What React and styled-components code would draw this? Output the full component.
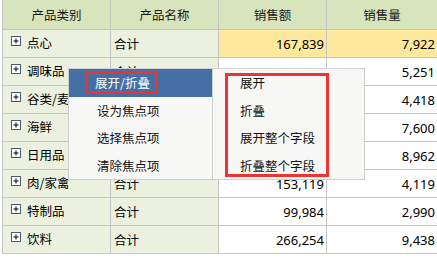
import React from "react";
import styled, { createGlobalStyle } from "styled-components";

const Global = createGlobalStyle`
  html, body { margin: 0; padding: 0; background: #fff; }
  body { font-family: "Noto Sans", "Noto Sans CJK SC", sans-serif; }
`;

const Page = styled.div`
  position: relative;
  width: 437px;
  height: 258px;
  padding-left: 2px;
  box-sizing: border-box;
  overflow: hidden;
`;

const Table = styled.table`
  border-collapse: collapse;
  table-layout: fixed;
  width: 435px;
  border: 1px solid #c6c6c6;
  border-top: none;
`;

const Th = styled.th`
  height: 29px;
  padding: 0;
  background: #d8e4bc;
  border: 1px solid #c6c6c6;
  border-top: none;
  font-weight: normal;
  font-size: 12.5px;
  color: #1a1a1a;
  font-family: "Noto Sans CJK SC", sans-serif;
  text-align: center;
`;

const Td = styled.td`
  height: 27px;
  padding: 0 2px 0 3px;
  border: 1px solid #c6c6c6;
  background: ${(p) => (p.$tone === "dim" ? "#ebf1de" : p.$tone === "hot" ? "#fee89b" : "#fff")};
  text-align: ${(p) => (p.$num ? "right" : "left")};
  font-size: ${(p) => (p.$num ? "13px" : "12.5px")};
  font-family: ${(p) => (p.$num ? '"Noto Sans", sans-serif' : '"Noto Sans CJK SC", sans-serif')};
  color: #000;
  white-space: nowrap;
  overflow: hidden;
`;

const Cat = styled.div`
  display: flex;
  align-items: center;
  gap: 6px;
  padding-left: 5px;
  margin-top: -2px;
`;

const Plus = styled.svg`
  flex: none;
  margin-top: -3px;
`;

const Menu = styled.div`
  position: absolute;
  top: 68px;
  left: ${(p) => p.$left}px;
  width: ${(p) => p.$width}px;
  box-sizing: border-box;
  background: #f7f7f5;
  border: 1px solid #cfcfcf;
  font-family: "Noto Sans CJK SC", sans-serif;
  font-size: 12.5px;
  color: #111;
`;

const Item = styled.div`
  height: 27.5px;
  display: flex;
  align-items: center;
  padding-left: ${(p) => p.$pad}px;
  background: ${(p) => (p.$active ? "#4570a6" : "transparent")};
  color: ${(p) => (p.$active ? "#fff" : "#111")};
`;

const Marked = styled.span`
  margin-left: -12px;
  padding: 0 6px 0 8px;
  height: 21px;
  line-height: 17px;
  box-sizing: border-box;
  border: 2px solid #ee3333;
  display: inline-flex;
  align-items: center;
`;

const Frame = styled.div`
  position: absolute;
  left: 12px;
  top: 4px;
  width: 104px;
  height: 104px;
  box-sizing: border-box;
  border: 3px solid #ee3333;
`;

const rows = [
  ["点心", "167,839", "7,922", true],
  ["调味品", "104,368", "5,251"],
  ["谷类/麦片", "88,650", "4,418"],
  ["海鲜", "131,261", "7,600"],
  ["日用品", "234,507", "8,962"],
  ["肉/家禽", "153,119", "4,119"],
  ["特制品", "99,984", "2,990"],
  ["饮料", "266,254", "9,438"],
];

function PlusBox() {
  return (
    <Plus width="10" height="10" viewBox="0 0 10 10">
      <rect x="0.5" y="0.5" width="9" height="9" fill="#fff" stroke="#4a5a7a" />
      <path d="M2.5 5H7.5M5 2.5V7.5" stroke="#000" strokeWidth="1" />
    </Plus>
  );
}

export default function App() {
  return (
    <>
      <Global />
      <Page>
        <Table>
          <colgroup>
            <col style={{ width: 108 }} />
            <col style={{ width: 108 }} />
            <col style={{ width: 108 }} />
            <col style={{ width: 111 }} />
          </colgroup>
          <thead>
            <tr>
              <Th>产品类别</Th>
              <Th>产品名称</Th>
              <Th>销售额</Th>
              <Th>销售量</Th>
            </tr>
          </thead>
          <tbody>
            {rows.map(([cat, amt, qty, hot]) => (
              <tr key={cat}>
                <Td $tone="dim">
                  <Cat>
                    <PlusBox />
                    {cat}
                  </Cat>
                </Td>
                <Td $tone="dim">合计</Td>
                <Td $num $tone={hot ? "hot" : ""}>{amt}</Td>
                <Td $num $tone={hot ? "hot" : ""}>{qty}</Td>
              </tr>
            ))}
          </tbody>
        </Table>

        <Menu $left={68} $width={145}>
          <Item $pad={28} $active>
            <Marked>展开/折叠</Marked>
          </Item>
          <Item $pad={28}>设为焦点项</Item>
          <Item $pad={28}>选择焦点项</Item>
          <Item $pad={28}>清除焦点项</Item>
        </Menu>

        <Menu $left={212} $width={153}>
          <Item $pad={27}>展开</Item>
          <Item $pad={27}>折叠</Item>
          <Item $pad={27}>展开整个字段</Item>
          <Item $pad={27}>折叠整个字段</Item>
          <Frame />
        </Menu>
      </Page>
    </>
  );
}
